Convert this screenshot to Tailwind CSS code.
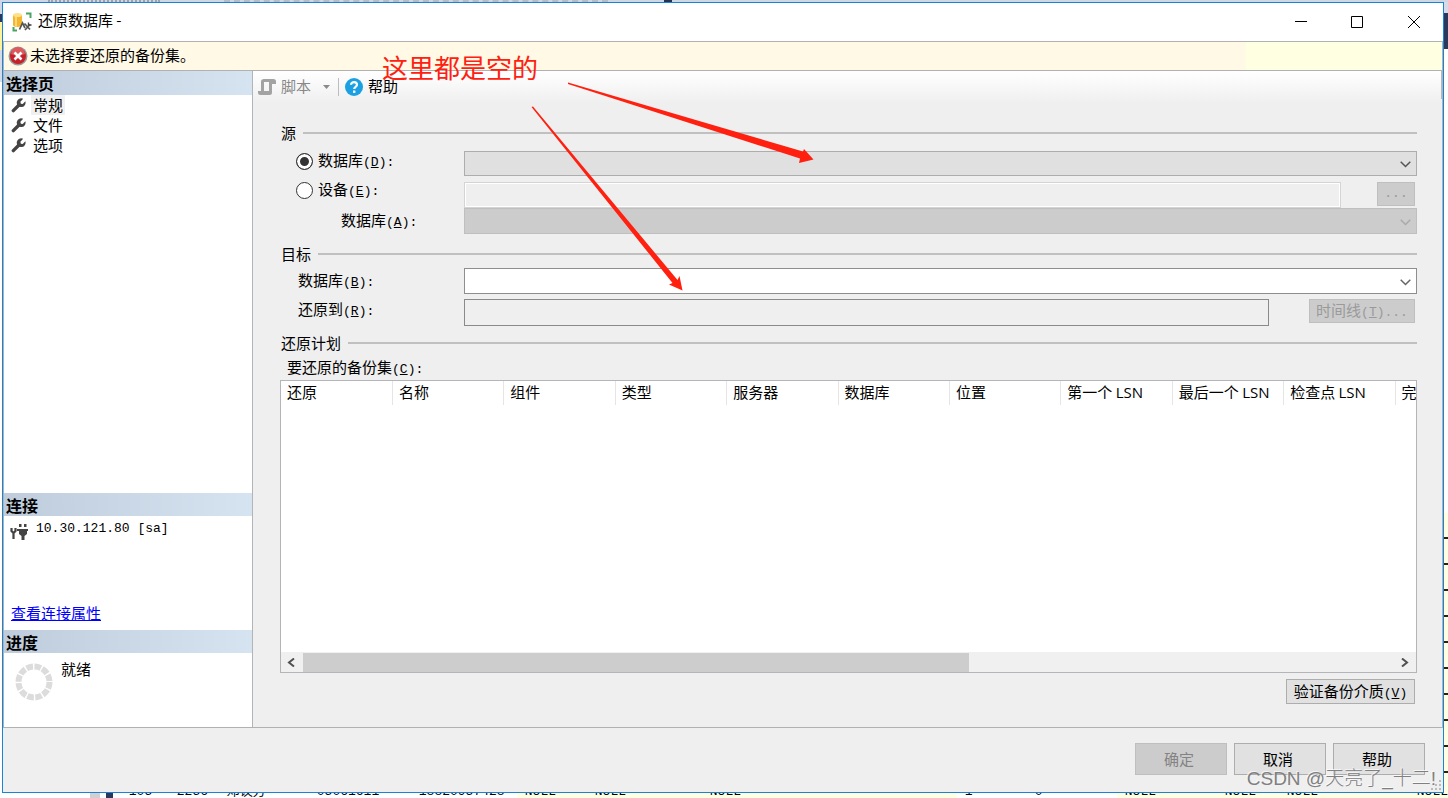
<!DOCTYPE html>
<html lang="zh-CN">
<head>
<meta charset="utf-8">
<title>还原数据库</title>
<script src="https://cdn.jsdelivr.net/npm/@tailwindcss/browser@4"></script>
</head>
<body class="h-screen overflow-hidden relative flex flex-col bg-white text-black text-[15px] leading-5 font-['Noto_Sans_CJK_SC',sans-serif]">

<!-- strip of the application behind the dialog -->
<div class="h-0.5 shrink-0 bg-[#cfd6e5] flex items-start overflow-hidden">
  <div class="ml-12 h-0.5 w-28 border-b-2 border-dotted border-[#9aa2b2]"></div>
  <div class="ml-16 h-0.5 w-96 border-b-2 border-dashed border-[#b4bccb]"></div>
  <div class="ml-14 h-0.5 w-2 bg-[#223356]"></div>
</div>

<div class="flex-1 min-h-0 flex">
  <div class="w-0.5 shrink-0 flex flex-col bg-white">
    <div class="h-3 bg-[#cfd6e5]"></div><div class="h-2 bg-[#29395b]"></div><div class="h-7 bg-[#fff29d]"></div><div class="h-8 bg-[#d6dbe9]"></div>
  </div>

  <main class="flex-1 min-w-0 border border-[#1883d7] bg-[#efefef] flex flex-col">
    <!-- title bar -->
    <header class="h-[38px] shrink-0 bg-white flex items-center pl-[9px]">
      <svg class="size-5 shrink-0" viewBox="0 0 20 20">
        <path d="M1 3v10c0 1.300 2 2 4.500 2S10 14.300 10 13V3z" fill="#f4b62c"/><path d="M3 5v9l2 .8V5z" fill="#fbd67b"/>
        <ellipse cx="5.500" cy="3" rx="4.500" ry="2" fill="#ffe08a"/>
        <path d="M14 1.500h4.500V6M1.500 15v3.500H5" fill="none" stroke="#4aa564" stroke-width="2"/>
        <path d="M7.500 17.500l3-6.500 2.500 5M13 18l5-5.500M12.500 11.500l5.500 6" fill="none" stroke="#555" stroke-width="1.700"/>
        <path d="M16.500 10.500v2.500h3" fill="none" stroke="#444" stroke-width="1.400"/>
      </svg>
      <h1 class="ml-[6px] flex-1 text-[15px] pb-1 font-normal">还原数据库 -</h1>
      <button aria-label="最小化" class="w-14 h-full flex items-center justify-center"><svg class="size-3" viewBox="0 0 12 12"><path d="M0 5.500h12" stroke="#000"/></svg></button>
      <button aria-label="最大化" class="w-14 h-full flex items-center justify-center"><svg class="size-3" viewBox="0 0 12 12"><path d="M.5.500h11v11H.5z" fill="none" stroke="#000"/></svg></button>
      <button aria-label="关闭" class="w-[58px] h-full flex items-center justify-center"><svg class="size-3" viewBox="0 0 12 12"><path d="M0 0l12 12M12 0L0 12" fill="none" stroke="#000"/></svg></button>
    </header>

    <!-- message bar -->
    <div class="h-[30px] shrink-0 border border-[#b1b1b1] bg-[#fff9e6] flex items-stretch">
      <div class="flex-1 flex items-center gap-0.5 pl-1">
        <svg class="size-5" viewBox="0 0 20 20"><circle cx="10" cy="10" r="9.500" fill="#999"/><circle cx="10" cy="10" r="8" fill="#c62029"/><path d="M3 8a7 7 0 0 1 14 0q-7 3-14 0" fill="#dc5a5e"/><path d="M6.500 6.500l7 7M13.500 6.500l-7 7" stroke="#fff" stroke-width="2.600"/></svg>
        <span class="pb-0.5">未选择要还原的备份集。</span>
      </div>
      <div class="w-[196px] bg-[#ffffe1]"></div>
    </div>

    <div class="flex-1 min-h-0 flex border-x border-b border-[#b1b1b1]">
      <!-- sidebar -->
      <aside class="w-[249px] shrink-0 border-r border-[#b1b5b9] bg-white flex flex-col">
        <section class="flex-1 min-h-0">
          <h2 class="h-6 pl-0.5 text-[16px] leading-6 font-bold bg-linear-to-r from-[#bfccdb] to-[#d6e3f1]">选择页</h2>
          <nav>
            <a href="#" class="flex items-center h-5 pl-[7px]"><svg class="size-[15px] shrink-0" viewBox="0 0 16 16"><path d="M2.500 13.500L8.500 7.500" stroke="#444" stroke-width="3.600" stroke-linecap="round"/><path d="M13 .8L10 4l.5 2 2 .4L15.300 3.500a4.700 4.700 0 1 1-2.300-2.700z" fill="#444"/></svg><span class="ml-[5px] px-0.5 bg-[#f0f0f0]">常规</span></a>
            <a href="#" class="flex items-center h-5 pl-[7px]"><svg class="size-[15px] shrink-0" viewBox="0 0 16 16"><path d="M2.500 13.500L8.500 7.500" stroke="#444" stroke-width="3.600" stroke-linecap="round"/><path d="M13 .8L10 4l.5 2 2 .4L15.300 3.500a4.700 4.700 0 1 1-2.300-2.700z" fill="#444"/></svg><span class="ml-[5px] px-0.5">文件</span></a>
            <a href="#" class="flex items-center h-5 pl-[7px]"><svg class="size-[15px] shrink-0" viewBox="0 0 16 16"><path d="M2.500 13.500L8.500 7.500" stroke="#444" stroke-width="3.600" stroke-linecap="round"/><path d="M13 .8L10 4l.5 2 2 .4L15.300 3.500a4.700 4.700 0 1 1-2.300-2.700z" fill="#444"/></svg><span class="ml-[5px] px-0.5">选项</span></a>
          </nav>
        </section>
        <section class="h-[137px] shrink-0 flex flex-col">
          <h2 class="h-[23px] pl-0.5 text-[16px] leading-6 font-bold bg-linear-to-r from-[#bfccdb] to-[#d6e3f1]">连接</h2>
          <div class="flex items-center pl-1.5 pt-0.5 h-6 gap-2">
            <svg class="size-[18px] mt-1" viewBox="0 0 18 18"><path d="M1.500 6v3l2 2 2-2V6M3.500 11v6" fill="none" stroke="#444" stroke-width="2.200"/><path d="M7 7h11v2h-1v3l-2.500 2v4h-3v-4L9 12V9H7zM9 2h2.500v3H9zM14 2h2.500v3H14z" fill="#444"/></svg>
            <span class="font-['Liberation_Mono',monospace] text-[13px]">10.30.121.80 [sa]</span>
          </div>
          <a href="#" class="mt-auto mb-[7px] ml-[7px] self-start text-[#0000ff] underline">查看连接属性</a>
        </section>
        <section class="h-[97px] shrink-0">
          <h2 class="h-[23px] pl-0.5 text-[16px] leading-6 font-bold bg-linear-to-r from-[#bfccdb] to-[#d6e3f1]">进度</h2>
          <div class="flex pl-[11px] pt-[6px] gap-2">
            <svg class="size-[38px] mt-1" viewBox="0 0 38 38"><circle cx="19" cy="19" r="15.500" fill="none" stroke="#dcdcdc" stroke-width="6" stroke-dasharray="6.620 1.495"/></svg>
            <span>就绪</span>
          </div>
        </section>
      </aside>

      <!-- general page -->
      <div class="flex-1 min-w-0 flex flex-col">
        <div class="h-8 shrink-0 flex items-center pl-[5px] bg-linear-to-b from-white to-[#efefef]" role="toolbar">
          <button disabled class="flex items-center text-[#888]">
            <svg class="size-[18px]" viewBox="0 0 18 18"><path d="M6 1h9.500Q18 1 18 3.500V6h-4v8.500q0 2.500-2.500 2.500H2.500Q0 17 0 14.500V13h3V3.500Q3 1 6 1zM6 4v9h5V4z" fill="#a3a3a3" fill-rule="evenodd"/></svg>
            <span class="ml-[5px] pb-0.5">脚本</span>
            <svg class="ml-3 w-[7px] h-1" viewBox="0 0 7 4"><path d="M0 0h7L3.500 4z" fill="#8a8a8a"/></svg>
          </button>
          <div class="ml-2 w-px h-[18px] bg-[#bdbdbd]"></div>
          <button class="ml-1.5 flex items-center gap-[5px]">
            <svg class="size-[18px]" viewBox="0 0 18 18"><circle cx="9" cy="9" r="9" fill="#1ba1e2"/><path d="M6 6.800C6 3.200 12 3.200 12 6.800 12 9 9.200 8.800 9.200 11" fill="none" stroke="#fff" stroke-width="2.200"/><path d="M8 12.500h2.400v2.400H8z" fill="#fff"/></svg>
            <span class="pb-0.5">帮助</span>
          </button>
          <div class="ml-auto self-start w-px h-7 bg-[#b8b8b8]"></div>
        </div>

        <form class="flex-1 min-h-0 flex flex-col pl-[27px] pr-[25px] pt-5 pb-[23px]">
          <div class="flex items-center gap-[7px] h-5 pl-px shrink-0"><h3>源</h3><hr class="flex-1 border-t-2 border-[#c0c0c0]"></div>

          <div class="mt-2 h-[25px] shrink-0 flex items-start">
            <div class="w-[184px] pl-4 h-5 flex items-center">
              <input id="src-db" name="src" type="radio" checked class="appearance-none size-[17px] shrink-0 rounded-full border border-[#333] bg-white checked:bg-[#333] checked:shadow-[inset_0_0_0_3px_white]">
              <label for="src-db" class="pl-[5px]">数据库<span class="font-['Liberation_Mono',monospace] text-[13px]">(<u>D</u>):</span></label>
            </div>
            <div class="relative flex-1 h-full">
              <select aria-label="源数据库" class="appearance-none block w-full h-full border border-[#adadad] bg-[#e0e0e0]"><option></option></select>
              <svg class="absolute right-[6px] top-[10px] w-[11px] h-[7px] pointer-events-none" viewBox="0 0 11 7"><path d="M.7.700l4.800 4.800L10.300.700" fill="none" stroke="#555" stroke-width="1.500"/></svg>
            </div>
          </div>
          <div class="mt-1.5 h-[26px] shrink-0 flex items-start">
            <div class="w-[184px] pl-4 h-4 flex items-center">
              <input id="src-dev" name="src" type="radio" class="appearance-none size-[17px] shrink-0 rounded-full border border-[#333] bg-white">
              <label for="src-dev" class="pl-[5px]">设备<span class="font-['Liberation_Mono',monospace] text-[13px]">(<u>E</u>):</span></label>
            </div>
            <input type="text" disabled aria-label="设备" class="flex-1 min-w-0 h-full border border-[#d4d4d4] bg-[#efefef] shadow-[inset_0_0_0_1px_white]">
            <button type="button" disabled aria-label="浏览" class="ml-9 mr-0.5 w-[38px] h-6 border border-[#bfbfbf] bg-[#cccccc] text-[#999] font-['Liberation_Mono',monospace] text-[13px]">...</button>
          </div>
          <div class="h-[26px] shrink-0 flex items-center">
            <label for="dev-db" class="w-[184px] pl-[61px]">数据库<span class="font-['Liberation_Mono',monospace] text-[13px]">(<u>A</u>):</span></label>
            <div class="relative flex-1 h-full">
              <select id="dev-db" disabled class="appearance-none block w-full h-full border border-[#bfbfbf] bg-[#cccccc] opacity-100"><option></option></select>
              <svg class="absolute right-[6px] top-[11px] w-[11px] h-[7px] pointer-events-none" viewBox="0 0 11 7"><path d="M.7.700l4.800 4.800L10.300.700" fill="none" stroke="#aaa" stroke-width="1.500"/></svg>
            </div>
          </div>

          <div class="mt-2.5 flex items-center gap-[7px] h-5 pl-px shrink-0"><h3>目标</h3><hr class="flex-1 border-t-2 border-[#c0c0c0]"></div>
          <div class="mt-1 h-[26px] shrink-0 flex items-center">
            <label for="dst-db" class="w-[184px] pl-[18px]">数据库<span class="font-['Liberation_Mono',monospace] text-[13px]">(<u>B</u>):</span></label>
            <div class="relative flex-1 h-full">
              <select id="dst-db" class="appearance-none block w-full h-full border border-[#8e8e8e] bg-white"><option></option></select>
              <svg class="absolute right-[6px] top-[11px] w-[11px] h-[7px] pointer-events-none" viewBox="0 0 11 7"><path d="M.7.700l4.800 4.800L10.300.700" fill="none" stroke="#666" stroke-width="1.500"/></svg>
            </div>
          </div>
          <div class="mt-[5px] h-[27px] shrink-0 flex items-start">
            <label for="restore-to" class="w-[184px] pl-[18px]">还原到<span class="font-['Liberation_Mono',monospace] text-[13px]">(<u>R</u>):</span></label>
            <input id="restore-to" type="text" readonly class="flex-1 min-w-0 h-full border border-[#8a8a8a] bg-[#efefef]">
            <button type="button" disabled class="ml-10 mr-0.5 w-[106px] h-6 pb-0.5 border border-[#bfbfbf] bg-[#cccccc] text-[#9a9a9a] leading-none whitespace-nowrap">时间线<span class="font-['Liberation_Mono',monospace] text-[13px]">(<u>T</u>)...</span></button>
          </div>

          <div class="mt-[7px] flex items-center gap-[7px] h-5 pl-px shrink-0"><h3>还原计划</h3><hr class="flex-1 border-t-2 border-[#c0c0c0]"></div>
          <div class="mt-1 h-5 shrink-0 pl-[7px]" id="sets">要还原的备份集<span class="font-['Liberation_Mono',monospace] text-[13px]">(<u>C</u>):</span></div>
          <div class="mt-[3px] flex-1 min-h-0 border border-[#b4b4bb] bg-white flex flex-col">
            <div class="flex-1 min-h-0 overflow-hidden">
              <table aria-labelledby="sets" class="table-fixed w-[1226px] border-collapse">
                <thead><tr class="h-6 text-left whitespace-nowrap [&>th]:font-normal [&>th]:p-0 [&>th]:pb-0.5 [&>th]:pl-[6px] [&>th]:border-r [&>th]:border-[#e5e5e5]">
                  <th>还原</th><th>名称</th><th>组件</th><th>类型</th><th>服务器</th><th>数据库</th><th>位置</th>
                  <th>第一个 <span class="font-['Open_Sans',sans-serif]">LSN</span></th><th>最后一个 <span class="font-['Open_Sans',sans-serif]">LSN</span></th><th>检查点 <span class="font-['Open_Sans',sans-serif]">LSN</span></th><th>完</th>
                </tr></thead>
              </table>
            </div>
            <div class="h-5 shrink-0 bg-[#f0f0f0] flex items-center">
              <svg class="w-[22px] h-[9px]" viewBox="0 0 22 9"><path d="M13 .5L8 4.500l5 4" fill="none" stroke="#505050" stroke-width="2"/></svg>
              <div class="flex-1 h-[19px]"><div class="w-[61%] h-full bg-[#cdcdcd]"></div></div>
              <svg class="w-[22px] h-[9px]" viewBox="0 0 22 9"><path d="M8 .5l5 4-5 4" fill="none" stroke="#505050" stroke-width="2"/></svg>
            </div>
          </div>
          <button type="button" class="mt-1.5 mr-0.5 self-end w-[129px] h-[25px] shrink-0 border border-[#adadad] bg-[#e1e1e1] leading-none whitespace-nowrap">验证备份介质<span class="font-['Liberation_Mono',monospace] text-[13px]">(<u>V</u>)</span></button>
        </form>
      </div>
    </div>

    <!-- dialog buttons -->
    <footer class="h-16 shrink-0 flex justify-end gap-[7px] pt-[15px] pr-[18px]">
      <button disabled class="w-[92px] h-8 border border-[#bfbfbf] bg-[#cccccc] text-[#838383] pr-1">确定</button>
      <button class="w-[92px] h-8 border border-[#adadad] bg-[#e1e1e1] pr-1">取消</button>
      <button class="w-[92px] h-8 border border-[#adadad] bg-[#e1e1e1] pr-1">帮助</button>
    </footer>
  </main>

  <div class="w-1 shrink-0 flex flex-col bg-white">
    <div class="h-[11px] bg-[#d6dbe9]"></div><div class="h-9 bg-[#29395b]"></div>
    <div class="flex-1"></div>
    <div class="h-[280px] bg-[repeating-linear-gradient(to_bottom,#ffffe1_0px,#ffffe1_24px,#222_24px,#222_26px)]"></div>
  </div>
</div>

<!-- clipped grid row under the dialog -->
<div class="h-[5px] shrink-0 overflow-hidden flex bg-white text-[13px] leading-3 font-['Liberation_Mono','Noto_Sans_CJK_SC',monospace]">
  <div class="ml-[90px] w-3 bg-[#d0d0d0]"></div><div class="ml-1.5 w-2 bg-[#29395b]"></div>
  <div class="flex items-end h-[5px] flex-1 whitespace-nowrap">
    <span class="w-12 pl-4">105</span><span class="w-[50px] pl-4">2256</span><span class="w-[90px] pl-4">邓议芳</span><span class="w-[102px] pl-4">05061611</span><span class="w-[114px] pl-4">18820957428</span>
    <span class="w-[70px] pl-2 bg-[#ffffe1]">NULL</span><span class="w-[115px] pl-2 bg-[#ffffe1]">NULL</span><span class="w-[255px] pl-2 bg-[#ffffe1]">NULL</span>
    <span class="w-[70px] pl-2">1</span><span class="w-[90px] pl-2">0</span>
    <span class="w-[100px] pl-2 bg-[#ffffe1]">NULL</span><span class="w-[62px] pl-2 bg-[#ffffe1]">NULL</span><span class="w-[130px] pl-2 bg-[#ffffe1]">NULL</span><span class="flex-1 pl-2 bg-[#ffffe1]">NULL</span>
  </div>
</div>

<!-- annotations drawn over the dialog -->
<p class="absolute left-[382px] top-[51px] text-[26px] leading-8 text-[#ff2010]">这里都是空的</p>
<svg class="absolute left-0 top-0 w-[900px] h-[320px] pointer-events-none" viewBox="0 0 900 320" fill="#ff2010">
  <path d="M568 82.500L803 151.500 804 149 813.500 159.500 799 163 800 158.500 568 84z"/>
  <path d="M531.500 107L533 106.500 677.500 280 679.500 276 682.500 290.500 669 284.500 672.500 283z"/>
</svg>
<p class="absolute right-[12px] bottom-[7px] text-[19px] leading-6 font-light text-[#808080] [text-shadow:-1px_-1px_0_#ffffffb0] whitespace-nowrap font-['Liberation_Sans','Noto_Sans_CJK_SC',sans-serif]">CSDN @天亮了_十二!</p>
<svg class="absolute right-[6px] bottom-[7px] size-[11px]" viewBox="0 0 11 11" fill="#bcbcbc"><path d="M8 0h2v2H8zM4 4h2v2H4zM8 4h2v2H8zM0 8h2v2H0zM4 8h2v2H4zM8 8h2v2H8z"/></svg>
</body>
</html>
